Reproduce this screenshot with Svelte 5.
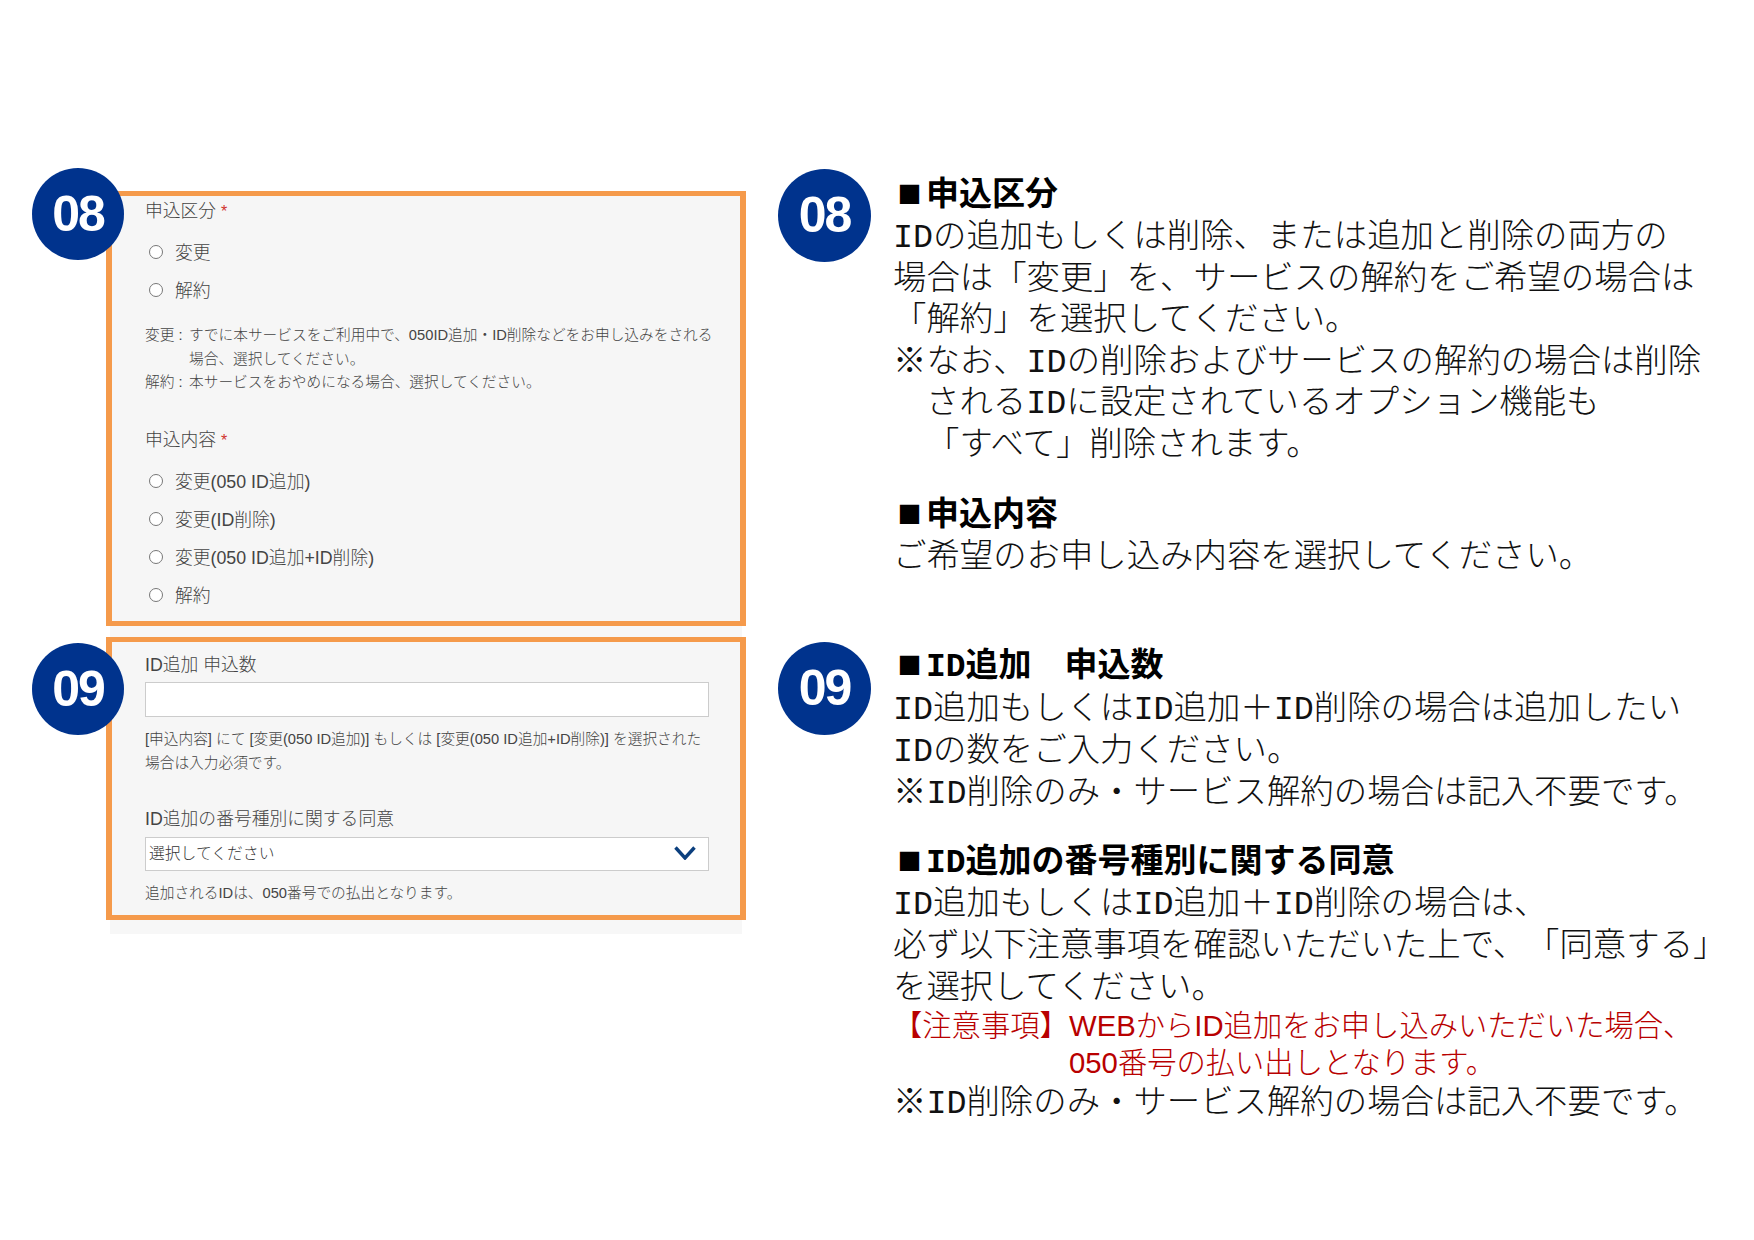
<script>
  // Help page: form capture on the left, explanation on the right
  const typeOptions = ['変更', '解約'];
  const contentOptions = ['変更(050 ID追加)', '変更(ID削除)', '変更(050 ID追加+ID削除)', '解約'];
</script>

<div class="page">
  <div class="form-col">
    <section class="box first">
      <div class="badge">08</div>
      <div class="label">申込区分 <span class="req">*</span></div>
      <div class="radios">
        {#each typeOptions as opt}
          <label class="radio"><input type="radio" name="type" />{opt}</label>
        {/each}
      </div>
      <div class="note">
        <span>変更 :</span><span>すでに本サービスをご利用中で、050ID追加・ID削除などをお申し込みをされる<br />場合、選択してください。</span>
        <span>解約 :</span><span>本サービスをおやめになる場合、選択してください。</span>
      </div>
      <div class="label second">申込内容 <span class="req">*</span></div>
      <div class="radios tight">
        {#each contentOptions as opt}
          <label class="radio"><input type="radio" name="content" />{opt}</label>
        {/each}
      </div>
    </section>

    <section class="box">
      <div class="badge">09</div>
      <div class="label">ID追加 申込数</div>
      <input class="field" type="text" />
      <p class="help">[申込内容] にて [変更(050 ID追加)] もしくは [変更(050 ID追加+ID削除)] を選択された<br />場合は入力必須です。</p>
      <div class="label second">ID追加の番号種別に関する同意</div>
      <div class="select-wrap">
        <select class="select"><option>選択してください</option></select>
        <svg class="chevron" viewBox="0 0 22 14" width="22" height="14" aria-hidden="true">
          <path d="M1.5 1.5 L11 12 L20.5 1.5" fill="none" stroke="#0b3f7e" stroke-width="3.4" />
        </svg>
      </div>
      <p class="help last">追加されるIDは、050番号での払出となります。</p>
    </section>
  </div>

  <div class="text-col">
    <section class="explain one">
      <div class="disc">08</div>
      <div class="copy pad">
        <h3><i>■</i>申込区分</h3>
        <p>IDの追加もしくは削除、または追加と削除の両方の<br />場合は「変更」を、サービスの解約をご希望の場合は<br />「解約」を選択してください。<br />※なお、IDの削除およびサービスの解約の場合は削除<br /><span class="indent">されるIDに設定されているオプション機能も</span><br /><span class="indent">「すべて」削除されます。</span></p>
        <h3 class="next"><i>■</i>申込内容</h3>
        <p>ご希望のお申し込み内容を選択してください。</p>
      </div>
    </section>

    <section class="explain">
      <div class="disc">09</div>
      <div class="copy up">
        <h3><i>■</i>ID追加　申込数</h3>
        <p>ID追加もしくはID追加＋ID削除の場合は追加したい<br />IDの数をご入力ください。<br />※ID削除のみ・サービス解約の場合は記入不要です。</p>
        <h3 class="next"><i>■</i>ID追加の番号種別に関する同意</h3>
        <p>ID追加もしくはID追加＋ID削除の場合は、<br />必ず以下注意事項を確認いただいた上で、「同意する」<br />を選択してください。</p>
        <div class="caution">
          <span>【注意事項】</span><span>WEBからID追加をお申し込みいただいた場合、<br />050番号の払い出しとなります。</span>
        </div>
        <p>※ID削除のみ・サービス解約の場合は記入不要です。</p>
      </div>
    </section>
  </div>
</div>

<style>
  :global(body) { margin: 0; background: #fff; }

  .page {
    width: 1754px;
    height: 1240px;
    box-sizing: border-box;
    display: flex;
    padding-left: 106px;
    font-family: "Liberation Sans", "Noto Sans CJK JP", sans-serif;
    overflow: hidden;
  }

  /* left column */
  .form-col {
    width: 632px;
    margin: 191px 0 0 4px;
    height: 743px;
    background: #f7f7f7;
    flex: none;
  }
  .box {
    position: relative;
    margin: 0 -4px 11px;
    border: 5px solid #f59a4b;
    border-width: 5px 6px;
    background: #f6f6f6;
    padding: 11px 33px 10px 33px;
    height: 283px;
    box-sizing: border-box;
    color: #444;
  }
  .box.first { height: 435px; padding-top: 3px; }

  .badge {
    position: absolute;
    left: -80px;
    top: -28px;
    width: 92px;
    height: 92px;
    border-radius: 50%;
    background: #00338d;
    color: #fff;
    font: bold 50px/92px "Liberation Sans", sans-serif;
    letter-spacing: -2px;
    text-align: center;
  }
  .box:not(.first) .badge { top: 1px; }

  .label { font-size: 17.8px; line-height: 24px; font-weight: 300; white-space: nowrap; }
  .label.second { margin-top: 33px; }
  .help + .label.second { margin-top: 32px; }
  .req { color: #d0342c; font-size: 16px; }

  .radios { margin-top: 8px; }
  .radios.tight { margin-top: 8px; }
  .radio {
    display: flex;
    align-items: center;
    height: 38px;
    font-size: 17.8px;
    font-weight: 300;
    padding-left: 4px;
  }
  .radio input {
    appearance: none;
    width: 14px;
    height: 14px;
    margin: 2px 12px 0 0;
    border: 1px solid #777;
    border-radius: 50%;
    background: #fff;
  }

  .note {
    margin-top: 16px;
    display: grid;
    grid-template-columns: 44px 1fr;
    font-size: 14.7px;
    line-height: 23.5px;
    font-weight: 300;
    white-space: nowrap;
  }

  .field {
    display: block;
    width: 564px;
    height: 35px;
    margin-top: 5px;
    box-sizing: border-box;
    border: 1px solid #ccc;
    background: #fff;
  }
  .help {
    margin: 11px 0 0;
    font-size: 14.7px;
    line-height: 23.5px;
    font-weight: 300;
    white-space: nowrap;
  }
  .help.last { margin-top: 11px; }

  .select-wrap { position: relative; width: 564px; margin-top: 6px; }
  .select {
    display: block;
    width: 100%;
    height: 34px;
    box-sizing: border-box;
    appearance: none;
    border: 1px solid #ccc;
    border-radius: 0;
    background: #fff;
    color: #333;
    padding: 0 3px 4px;
    font: 300 15.8px "Noto Sans CJK JP", sans-serif;
  }
  .chevron { position: absolute; right: 13px; top: 9px; }

  /* right column */
  .text-col { margin-left: 36px; padding-top: 169px; }
  .explain { display: flex; gap: 22px; }
  .explain.one { min-height: 473px; }
  .disc {
    width: 93px;
    height: 93px;
    flex: none;
    border-radius: 50%;
    background: #00338d;
    color: #fff;
    font: bold 50px/93px "Liberation Sans", sans-serif;
    letter-spacing: -2px;
    text-align: center;
  }
  .copy {
    font-family: "Liberation Mono", "Noto Sans CJK JP", sans-serif;
    color: #111;
    font-size: 33.4px;
    line-height: 42px;
    white-space: nowrap;
    text-spacing-trim: space-all;
  }
  .copy.pad { padding-top: 3px; line-height: 41.6px; }
  .copy.up { margin-top: 1px; }
  .copy h3 { margin: 0; font-size: 33px; line-height: 42px; font-weight: 700; color: #000; }
  .copy h3 i { font-family: "Noto Sans CJK JP", sans-serif; font-style: normal; display: inline-block; width: 33px; text-align: center; font-size: 24px; vertical-align: 2px; }
  .copy h3.next { margin-top: 24px; }
  .copy.up h3.next { margin-top: 24px; margin-bottom: -1px; }
  .copy p { margin: 0; font-weight: 300; }
  .indent { margin-left: 33px; }

  .caution {
    display: grid;
    grid-template-columns: 176px auto;
    margin: -3px 0 2px;
    font-family: "Liberation Sans", "Noto Sans CJK JP", sans-serif;
    color: #b80000;
    font-size: 29.3px;
    line-height: 37px;
    font-weight: 300;
  }
</style>
